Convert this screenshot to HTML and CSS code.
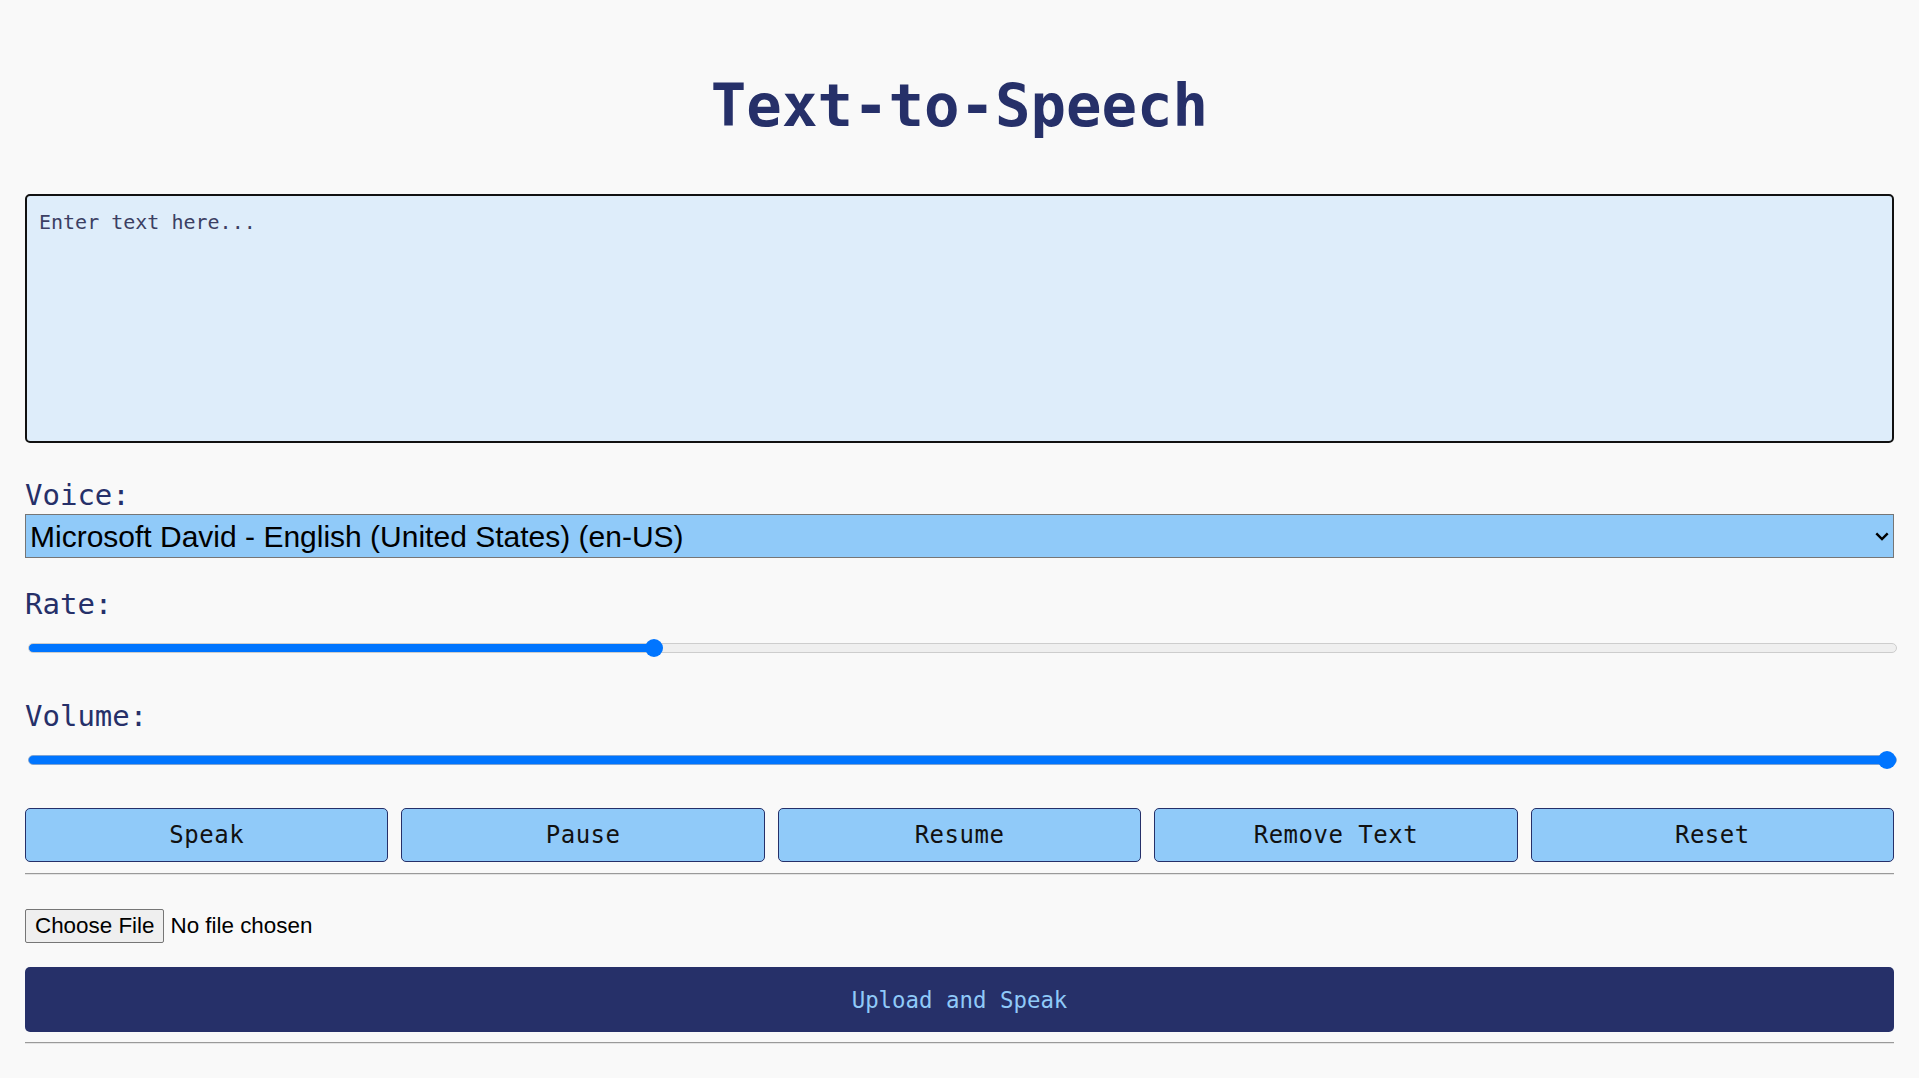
FILE: index.html
```html
<!DOCTYPE html>
<html lang="en">
<head>
<meta charset="utf-8">
<title>Text-to-Speech</title>
<link rel="stylesheet" href="styles.css">
</head>
<body>
<main class="app">
  <h1 class="title">Text-to-Speech</h1>
  <textarea class="text-input" placeholder="Enter text here..."></textarea>

  <label class="field-label" for="voice">Voice:</label>
  <select id="voice" class="voice-select">
    <option>Microsoft David - English (United States) (en-US)</option>
  </select>

  <label class="field-label label-rate" for="rate">Rate:</label>
  <input id="rate" class="slider slider-rate" type="range" min="0.5" max="2" step="0.1" value="1" style="--fill: 33.5%">

  <label class="field-label label-volume" for="volume">Volume:</label>
  <input id="volume" class="slider slider-volume" type="range" min="0" max="1" step="0.1" value="1" style="--fill: 100%">

  <div class="controls">
    <button class="ctrl-btn">Speak</button>
    <button class="ctrl-btn">Pause</button>
    <button class="ctrl-btn">Resume</button>
    <button class="ctrl-btn">Remove Text</button>
    <button class="ctrl-btn">Reset</button>
  </div>
  <hr class="divider divider-top">

  <input class="file-input" type="file">
  <button class="upload-btn">Upload and Speak</button>
  <hr class="divider divider-bottom">
</main>
</body>
</html>
```

FILE: styles.css
```css
html, body {
  margin: 0;
  padding: 0;
  background: #f9f9f9;
}

body {
  font-family: "DejaVu Sans Mono", "Liberation Mono", monospace;
  color: #263069;
}

.app {
  padding: 0 25px;
  display: flex;
  flex-direction: column;
}

.title {
  margin: 76px 0 0;
  font-size: 59px;
  line-height: 59px;
  font-weight: bold;
  text-align: center;
  color: #263069;
}

.text-input {
  display: block;
  box-sizing: border-box;
  width: 100%;
  height: 249px;
  margin-top: 59px;
  padding: 14px 12px;
  border: 2px solid #111;
  border-radius: 5px;
  background: #deedfa;
  font-family: "DejaVu Sans Mono", monospace;
  font-size: 20px;
  color: #222;
  resize: none;
  outline: none;
}

.text-input::placeholder {
  color: #3b3f63;
}

.field-label {
  display: block;
  font-size: 29px;
  line-height: 33px;
  margin-top: 36px;
  color: #263069;
}

.voice-select {
  -webkit-appearance: none;
  appearance: none;
  display: block;
  box-sizing: border-box;
  width: 100%;
  height: 44px;
  margin-top: 2px;
  padding: 0 30px 0 4px;
  border: 1px solid #767676;
  border-radius: 0;
  background-color: #90caf9;
  background-image: url("data:image/svg+xml;utf8,<svg xmlns='http://www.w3.org/2000/svg' width='14' height='9' viewBox='0 0 14 9'><path d='M1.3 1.3 L7 7 L12.7 1.3' fill='none' stroke='%23000' stroke-width='2.4'/></svg>");
  background-repeat: no-repeat;
  background-position: right 4px center;
  font-family: "Liberation Sans", Arial, sans-serif;
  font-size: 30px;
  color: #000;
}

.label-rate {
  margin-top: 30px;
}

.label-volume {
  margin-top: 43px;
}

.slider {
  -webkit-appearance: none;
  appearance: none;
  display: block;
  box-sizing: border-box;
  width: 100%;
  height: 18px;
  margin: 18px 0 0 3px;
  background: transparent;
}

.slider::-webkit-slider-runnable-track {
  height: 10px;
  box-sizing: border-box;
  border-radius: 5px;
  border: 1px solid #cdcdcd;
  background: linear-gradient(to right, #0075ff var(--fill), #efefef var(--fill));
}

.slider-volume::-webkit-slider-runnable-track {
  border-color: #7ea3d3;
}

.slider::-webkit-slider-thumb {
  -webkit-appearance: none;
  appearance: none;
  width: 18px;
  height: 18px;
  border-radius: 50%;
  background: #0075ff;
  border: none;
  margin-top: -5px;
}

.controls {
  display: flex;
  gap: 13px;
  margin-top: 39px;
}

.ctrl-btn {
  flex: 1;
  height: 54px;
  border: 1px solid #263069;
  border-radius: 5px;
  background: #90caf9;
  font-family: "DejaVu Sans Mono", monospace;
  font-size: 24px;
  letter-spacing: 0.5px;
  color: #111;
  cursor: pointer;
}

.divider {
  width: 100%;
  box-sizing: border-box;
  margin: 0;
  border: 0;
  border-top: 1px solid #9a9a9a;
  border-bottom: 1px solid #e4e4e4;
  height: 0;
}

.divider-top {
  margin-top: 11px;
}

.file-input {
  display: block;
  margin-top: 34px;
  font-family: "Liberation Sans", Arial, sans-serif;
  font-size: 22.4px;
  color: #000;
}

.file-input::file-selector-button {
  font-family: "Liberation Sans", Arial, sans-serif;
  font-size: 22.4px;
  padding: 3px 9px;
  margin-right: 6px;
  border: 1px solid #767676;
  border-radius: 2px;
  background: #efefef;
  color: #000;
}

.upload-btn {
  display: block;
  width: 100%;
  height: 65px;
  margin-top: 24px;
  border: none;
  border-radius: 5px;
  background: #263069;
  color: #90caf9;
  font-family: "DejaVu Sans Mono", monospace;
  font-size: 22.4px;
  cursor: pointer;
}

.divider-bottom {
  margin-top: 10px;
}
```
